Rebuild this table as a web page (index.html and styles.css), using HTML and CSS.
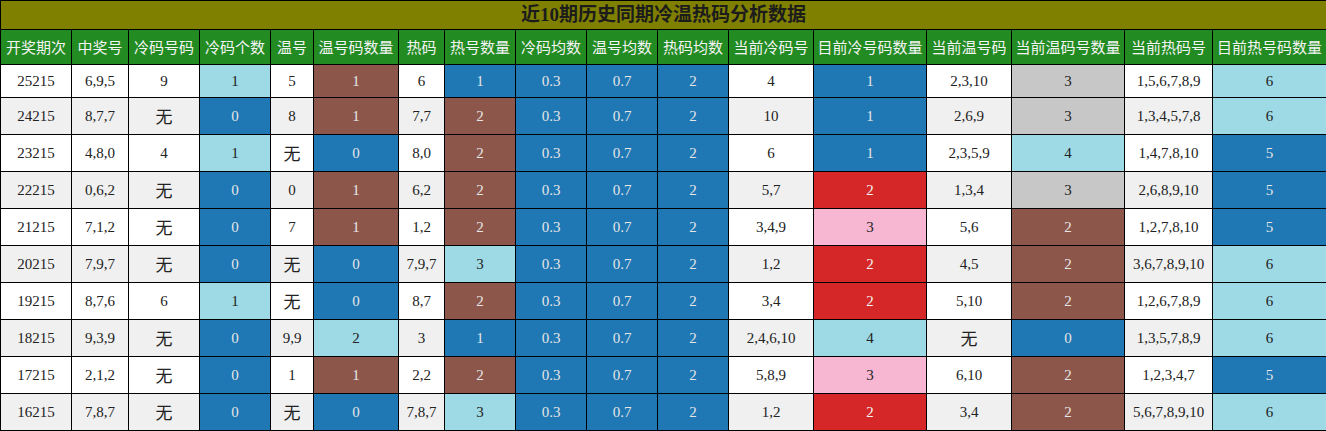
FILE: index.html
```html
<!DOCTYPE html>
<html lang="zh">
<head>
<meta charset="utf-8">
<title>近10期历史同期冷温热码分析数据</title>
<link rel="stylesheet" href="styles.css">
</head>
<body>
<table class="grid">
  <colgroup>
    <col style="width:71px"><col style="width:57px"><col style="width:71px"><col style="width:71px">
    <col style="width:43px"><col style="width:85px"><col style="width:46px"><col style="width:71px">
    <col style="width:71px"><col style="width:71px"><col style="width:71px"><col style="width:85px">
    <col style="width:113px"><col style="width:85px"><col style="width:113px"><col style="width:88px">
    <col style="width:114px">
  </colgroup>
  <thead>
    <tr class="title-row"><th colspan="17" class="title">近10期历史同期冷温热码分析数据</th></tr>
    <tr class="head-row">
      <th>开奖期次</th><th>中奖号</th><th>冷码号码</th><th>冷码个数</th><th>温号</th><th>温号码数量</th><th>热码</th><th>热号数量</th><th>冷码均数</th><th>温号均数</th><th>热码均数</th><th>当前冷码号</th><th>目前冷号码数量</th><th>当前温号码</th><th>当前温码号数量</th><th>当前热码号</th><th>目前热号码数量</th>
    </tr>
  </thead>
  <tbody>
    <tr class="r1 odd">
      <td>25215</td><td>6,9,5</td><td>9</td><td class="lb">1</td><td>5</td><td class="br">1</td><td>6</td><td class="bl">1</td><td class="bl">0.3</td><td class="bl">0.7</td><td class="bl">2</td><td>4</td><td class="bl">1</td><td>2,3,10</td><td class="gy">3</td><td>1,5,6,7,8,9</td><td class="lb">6</td>
    </tr>
    <tr class="even">
      <td>24215</td><td>8,7,7</td><td class="cj">无</td><td class="bl">0</td><td>8</td><td class="br">1</td><td>7,7</td><td class="br">2</td><td class="bl">0.3</td><td class="bl">0.7</td><td class="bl">2</td><td>10</td><td class="bl">1</td><td>2,6,9</td><td class="gy">3</td><td>1,3,4,5,7,8</td><td class="lb">6</td>
    </tr>
    <tr class="odd">
      <td>23215</td><td>4,8,0</td><td>4</td><td class="lb">1</td><td class="cj">无</td><td class="bl">0</td><td>8,0</td><td class="br">2</td><td class="bl">0.3</td><td class="bl">0.7</td><td class="bl">2</td><td>6</td><td class="bl">1</td><td>2,3,5,9</td><td class="lb">4</td><td>1,4,7,8,10</td><td class="bl">5</td>
    </tr>
    <tr class="even">
      <td>22215</td><td>0,6,2</td><td class="cj">无</td><td class="bl">0</td><td>0</td><td class="br">1</td><td>6,2</td><td class="br">2</td><td class="bl">0.3</td><td class="bl">0.7</td><td class="bl">2</td><td>5,7</td><td class="rd">2</td><td>1,3,4</td><td class="gy">3</td><td>2,6,8,9,10</td><td class="bl">5</td>
    </tr>
    <tr class="odd">
      <td>21215</td><td>7,1,2</td><td class="cj">无</td><td class="bl">0</td><td>7</td><td class="br">1</td><td>1,2</td><td class="br">2</td><td class="bl">0.3</td><td class="bl">0.7</td><td class="bl">2</td><td>3,4,9</td><td class="pk">3</td><td>5,6</td><td class="br">2</td><td>1,2,7,8,10</td><td class="bl">5</td>
    </tr>
    <tr class="even">
      <td>20215</td><td>7,9,7</td><td class="cj">无</td><td class="bl">0</td><td class="cj">无</td><td class="bl">0</td><td>7,9,7</td><td class="lb">3</td><td class="bl">0.3</td><td class="bl">0.7</td><td class="bl">2</td><td>1,2</td><td class="rd">2</td><td>4,5</td><td class="br">2</td><td>3,6,7,8,9,10</td><td class="lb">6</td>
    </tr>
    <tr class="odd">
      <td>19215</td><td>8,7,6</td><td>6</td><td class="lb">1</td><td class="cj">无</td><td class="bl">0</td><td>8,7</td><td class="br">2</td><td class="bl">0.3</td><td class="bl">0.7</td><td class="bl">2</td><td>3,4</td><td class="rd">2</td><td>5,10</td><td class="br">2</td><td>1,2,6,7,8,9</td><td class="lb">6</td>
    </tr>
    <tr class="even">
      <td>18215</td><td>9,3,9</td><td class="cj">无</td><td class="bl">0</td><td>9,9</td><td class="lb">2</td><td>3</td><td class="bl">1</td><td class="bl">0.3</td><td class="bl">0.7</td><td class="bl">2</td><td>2,4,6,10</td><td class="lb">4</td><td class="cj">无</td><td class="bl">0</td><td>1,3,5,7,8,9</td><td class="lb">6</td>
    </tr>
    <tr class="odd">
      <td>17215</td><td>2,1,2</td><td class="cj">无</td><td class="bl">0</td><td>1</td><td class="br">1</td><td>2,2</td><td class="br">2</td><td class="bl">0.3</td><td class="bl">0.7</td><td class="bl">2</td><td>5,8,9</td><td class="pk">3</td><td>6,10</td><td class="br">2</td><td>1,2,3,4,7</td><td class="bl">5</td>
    </tr>
    <tr class="even">
      <td>16215</td><td>7,8,7</td><td class="cj">无</td><td class="bl">0</td><td class="cj">无</td><td class="bl">0</td><td>7,8,7</td><td class="lb">3</td><td class="bl">0.3</td><td class="bl">0.7</td><td class="bl">2</td><td>1,2</td><td class="rd">2</td><td>3,4</td><td class="br">2</td><td>5,6,7,8,9,10</td><td class="lb">6</td>
    </tr>
  </tbody>
</table>
</body>
</html>
```

FILE: styles.css
```css
html, body {
  margin: 0;
  padding: 0;
  background: #ffffff;
}

.grid {
  border-collapse: collapse;
  table-layout: fixed;
  width: 1326px;
  font-family: "Liberation Serif", "Noto Sans CJK SC", serif;
  font-size: 15px;
  color: #222222;
}

.grid th,
.grid td {
  border: 1px solid #000000;
  padding: 0;
  text-align: center;
  vertical-align: middle;
  white-space: nowrap;
  overflow: hidden;
}

.title-row { height: 29px; }

.title {
  background: #808000;
  color: #1c1c1c;
  font-family: "Liberation Serif", "Noto Sans CJK SC", serif;
  font-size: 19px;
  font-weight: bold;
  line-height: 26px;
}

.head-row { height: 35px; }

.head-row th {
  background: #228b22;
  color: #f4f4f4;
  font-family: "Noto Sans CJK SC", sans-serif;
  font-weight: normal;
  font-size: 15px;
  line-height: 20px;
}

.grid tbody tr { height: 37px; }
.grid tbody tr.r1 { height: 33px; }

.grid td { line-height: 20px; }

.odd td { background: #ffffff; }
.even td { background: #f0f0f0; }

.cj {
  font-family: "Noto Sans CJK SC", sans-serif;
  font-size: 17px;
}

.grid td.bl { background: #1f77b4; color: #e6e6e6; }
.grid td.br { background: #8c564b; color: #e6e6e6; }
.grid td.rd { background: #d62728; color: #f2f2f2; }
.grid td.lb { background: #9edae5; color: #222222; }
.grid td.gy { background: #c7c7c7; color: #222222; }
.grid td.pk { background: #f7b6d2; color: #222222; }
```
